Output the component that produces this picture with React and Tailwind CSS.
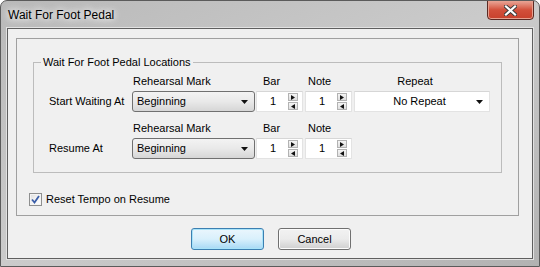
import React from 'react';

const DropArrow = () => (
  <svg width="7" height="4" viewBox="0 0 7 4" className="block">
    <path d="M0 0H7L3.5 4Z" fill="#111" />
  </svg>
);

const Combo = ({ value }) => (
  <div className="w-[123px] h-[21px] rounded-[3px] border border-[#707070] bg-gradient-to-b from-[#f3f3f3] via-[#e9e9e9] to-[#d6d6d6] flex items-center pl-[4px] pr-[6px] justify-between">
    <span>{value}</span>
    <DropArrow />
  </div>
);

const SpinButton = ({ dir }) => (
  <div className="w-[10px] h-[8px] border border-[#b2b2b2] bg-gradient-to-b from-[#f5f5f5] to-[#dedede] flex items-center justify-center">
    <svg width="4" height="5" viewBox="0 0 4 5" className="block">
      {dir === 'up' ? <path d="M0 0L4 2.5L0 5Z" fill="#111" /> : <path d="M4 0L0 2.5L4 5Z" fill="#111" />}
    </svg>
  </div>
);

const Spin = ({ value }) => (
  <div className="w-[47px] h-[21px] bg-white border border-[#e3e3e3] border-t-[#d6d6d6] flex items-center">
    <span className="w-[31px] pl-[13px]">{value}</span>
    <div className="flex flex-col gap-px">
      <SpinButton dir="up" />
      <SpinButton dir="down" />
    </div>
  </div>
);

const Button = ({ children, primary }) => (
  <div
    className={
      primary
        ? 'w-[73px] h-[22px] rounded-[3px] border border-[#3c7fb1] bg-gradient-to-b from-[#eaf6fd] via-[#d9f0fc] to-[#a7d9f5] flex items-center justify-center shadow-[inset_0_0_0_1px_#a8e3f9]'
        : 'w-[73px] h-[22px] rounded-[3px] border border-[#707070] bg-gradient-to-b from-[#f2f2f2] via-[#ebebeb] to-[#cfcfcf] flex items-center justify-center shadow-[inset_0_0_0_1px_#fcfcfc]'
    }
  >
    {children}
  </div>
);

export default function App() {
  return (
    <div className="w-[540px] h-[267px] rounded-t-[7px] border border-[#5b5b5b] bg-gradient-to-br from-[#b9b9b9] via-[#cbcbcb] to-[#b2b2b2] overflow-hidden font-['Liberation_Sans',Arial,sans-serif] text-[11px] text-black">
      {/* title bar */}
      <div className="h-[27px] flex items-start justify-between pl-[7px] pr-[5px]">
        <span className="mt-[7px] text-[12px] leading-[14px] [text-shadow:0_0_6px_#fff,0_0_10px_#fff]">Wait For Foot Pedal</span>
        <div className="w-[47px] h-[20px] -mt-px rounded-b-[4px] border border-[#5a2a24] bg-gradient-to-b from-[#e8a597] via-[#d24f3a] to-[#c8402c] shadow-[inset_0_0_0_1px_#e7a08f] flex items-center justify-center">
          <svg width="13" height="11" viewBox="0 0 13 11" className="block">
            <path d="M2 1.5L11 9.5M11 1.5L2 9.5" stroke="#3a3a3a" strokeWidth="4" strokeLinecap="square" />
            <path d="M2 1.5L11 9.5M11 1.5L2 9.5" stroke="#fff" strokeWidth="2.2" strokeLinecap="square" />
          </svg>
        </div>
      </div>

      {/* client area */}
      <div className="mx-[6px] h-[231px] border border-[#5f5f5f] bg-[#f0f0f0] shadow-[0_0_0_1px_#e2e2e2]">
        <div className="ml-[8px] mt-[9px] w-[503px] h-[178px] border border-[#a0a0a0] flex flex-col">
          <fieldset className="ml-[16px] mt-[17px] w-[469px] h-[117px] border border-[#bcbcbc]">
            <legend className="ml-[7px] px-[2px] leading-[13px]">Wait For Foot Pedal Locations</legend>

            <div className="flex mt-[5px] h-[14px] items-center">
              <div className="w-[98px]" />
              <div className="w-[124px] pl-[1px]">Rehearsal Mark</div>
              <div className="w-[49px] pl-[7px]">Bar</div>
              <div className="w-[49px] pl-[3px]">Note</div>
              <div className="w-[136px] text-center pr-[14px]">Repeat</div>
            </div>
            <div className="flex mt-[3px] items-center">
              <div className="w-[98px] pl-[15px]">Start Waiting At</div>
              <Combo value="Beginning" />
              <div className="ml-[1px]"><Spin value="1" /></div>
              <div className="ml-[2px]"><Spin value="1" /></div>
              <div className="ml-[2px] w-[136px] h-[21px] bg-white border border-[#e3e3e3] border-t-[#d6d6d6] flex items-center pr-[6px]">
                <span className="flex-1 text-center pl-[8px]">No Repeat</span>
                <DropArrow />
              </div>
            </div>

            <div className="flex mt-[9px] h-[14px] items-center">
              <div className="w-[98px]" />
              <div className="w-[124px] pl-[1px]">Rehearsal Mark</div>
              <div className="w-[49px] pl-[7px]">Bar</div>
              <div className="w-[49px] pl-[3px]">Note</div>
            </div>
            <div className="flex mt-[3px] items-center">
              <div className="w-[98px] pl-[15px]">Resume At</div>
              <Combo value="Beginning" />
              <div className="ml-[1px]"><Spin value="1" /></div>
              <div className="ml-[2px]"><Spin value="1" /></div>
            </div>
          </fieldset>

          <div className="ml-[12px] mt-[18px] flex items-center gap-[4px]">
            <div className="w-[13px] h-[13px] border border-[#8e8f8f] bg-gradient-to-br from-[#dcdcdc] via-[#f4f4f4] to-[#ffffff] shadow-[inset_0_0_0_1px_#f4f4f4] flex items-center justify-center">
              <svg width="9" height="9" viewBox="0 0 9 9" className="block">
                <path d="M1 4.5L3.5 7.5L8 1" stroke="#3b5ea8" strokeWidth="1.8" fill="none" />
              </svg>
            </div>
            <span>Reset Tempo on Resume</span>
          </div>
        </div>

        <div className="flex mt-[12px] ml-[183px] gap-[14px]">
          <Button primary>OK</Button>
          <Button>Cancel</Button>
        </div>
      </div>
    </div>
  );
}
